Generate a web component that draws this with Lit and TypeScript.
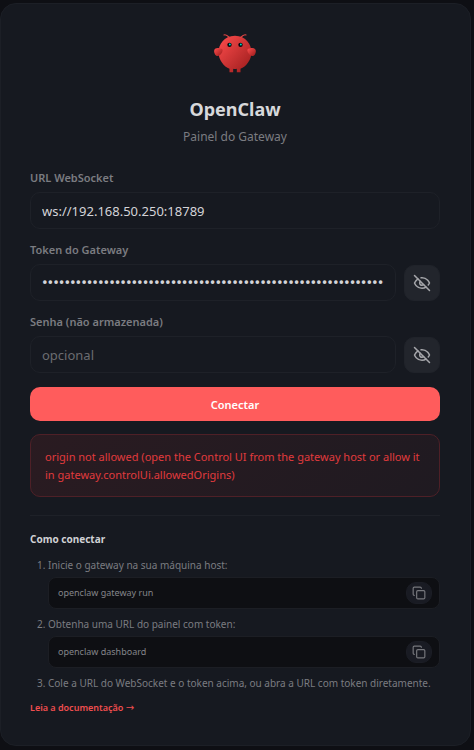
import { LitElement, html, css, svg } from "lit";
import { customElement, property, state } from "lit/decorators.js";

const eyeOff = svg`
  <path d="M9.88 9.88a3 3 0 1 0 4.24 4.24"/>
  <path d="M10.73 5.08A10.43 10.43 0 0 1 12 5c7 0 10 7 10 7a13.16 13.16 0 0 1-1.67 2.68"/>
  <path d="M6.61 6.61A13.526 13.526 0 0 0 2 12s3 7 10 7a9.74 9.74 0 0 0 5.39-1.61"/>
  <path d="m2 2 20 20"/>`;

const eye = svg`
  <path d="M2 12s3-7 10-7 10 7 10 7-3 7-10 7-10-7-10-7Z"/>
  <circle cx="12" cy="12" r="3"/>`;

@customElement("secret-field")
export class SecretField extends LitElement {
  @property() label = "";
  @property() value = "";
  @property() placeholder = "";
  @state() private revealed = false;

  static styles = css`
    :host { display: block; }
    * { box-sizing: border-box; }
    .label { display: block; font-size: 11px; line-height: 18px; font-weight: 600; color: #7b7c81; margin-bottom: 5px; }
    .row { display: flex; align-items: center; gap: 8px; }
    .input {
      flex: 1; min-width: 0; height: 37px; padding: 0 11px; border: 1px solid #1e2128; border-radius: 10px;
      background: #161920; color: #d4d4d8; font: inherit; font-size: 13px; outline: none;
    }
    .input[type="password"]:not(:placeholder-shown) { font-family: Roboto, sans-serif; font-size: 16px; font-weight: 500; }
    .input::placeholder { color: #6b6c70; opacity: 1; }
    .toggle {
      flex: none; width: 36px; height: 36px; padding: 0; display: grid; place-items: center;
      border: 1px solid #20232a; border-radius: 10px; background: #22252c; color: #a5a6aa; cursor: pointer;
    }
    .icon { width: 18px; height: 18px; fill: none; stroke: currentColor; stroke-width: 2; stroke-linecap: round; stroke-linejoin: round; }
  `;

  render() {
    return html`
      <label class="label" for="field">${this.label}</label>
      <div class="row">
        <input class="input" id="field" type=${this.revealed ? "text" : "password"}
          .value=${this.value} placeholder=${this.placeholder} autocomplete="off" />
        <button class="toggle" type="button" aria-label="Alternar visibilidade"
          @click=${() => (this.revealed = !this.revealed)}>
          <svg class="icon" viewBox="0 0 24 24" aria-hidden="true">${this.revealed ? eye : eyeOff}</svg>
        </button>
      </div>`;
  }
}

@customElement("command-line")
export class CommandLine extends LitElement {
  @property() command = "";

  static styles = css`
    :host { display: block; }
    * { box-sizing: border-box; }
    .box {
      display: flex; align-items: center; justify-content: space-between; height: 32px; padding: 0 7px 0 9px;
      border: 1px solid #1c1e24; border-radius: 8px; background: #0e0f13;
    }
    .code { font-family: inherit; font-size: 9px; line-height: 16px; color: #84858a; }
    .copy {
      width: 26px; height: 22px; padding: 0; display: grid; place-items: center;
      border: 1px solid #1b1d25; border-radius: 10px; background: #191b23; color: #77787d; cursor: pointer;
    }
    .icon { width: 14px; height: 14px; fill: none; stroke: currentColor; stroke-width: 2; stroke-linecap: round; stroke-linejoin: round; }
  `;

  render() {
    return html`
      <div class="box">
        <code class="code">${this.command}</code>
        <button class="copy" type="button" aria-label="Copiar comando"
          @click=${() => navigator.clipboard?.writeText(this.command)}>
          <svg class="icon" viewBox="0 0 24 24" aria-hidden="true">
            <rect x="8" y="8" width="14" height="14" rx="2"/>
            <path d="M4 16c-1.1 0-2-.9-2-2V4c0-1.1.9-2 2-2h10c1.1 0 2 .9 2 2"/>
          </svg>
        </button>
      </div>`;
  }
}

@customElement("app-root")
export class AppRoot extends LitElement {
  static styles = css`
    :host {
      display: block; box-sizing: border-box; min-height: 100vh; padding: 3px 3px 4px 0; background: #0e0f14;
      font-family: "Noto Sans", "Open Sans", sans-serif; color: #d4d4d8;
    }
    * { box-sizing: border-box; }
    .card { padding: 28px 30px 28px 29px; border: 1px solid #1c1f26; border-radius: 16px; background: #161920; }
    .header { display: flex; flex-direction: column; align-items: center; margin-bottom: 23px; }
    .logo { width: 44px; height: 44px; }
    .title { margin: 19px 0 0; font-size: 18px; line-height: 28px; font-weight: 700; color: #d7d8db; }
    .subtitle { margin: 5px 0 0; font-size: 12px; line-height: 18px; color: #7b7c81; }
    .form { display: flex; flex-direction: column; gap: 12px; }
    .label { display: block; font-size: 11px; line-height: 18px; font-weight: 600; color: #7b7c81; margin-bottom: 5px; }
    .input {
      display: block; width: 100%; height: 37px; padding: 0 11px; border: 1px solid #1e2128; border-radius: 10px;
      background: #161920; color: #d4d4d8; font: inherit; font-size: 13px; outline: none;
    }
    .submit {
      height: 34px; margin-top: 2px; border: 0; border-radius: 10px; background: #ff5c5c; color: #fff;
      font: inherit; font-size: 11px; font-weight: 600; cursor: pointer;
    }
    .error {
      margin-top: 13px; padding: 13px 14px 12px; border: 1px solid #4e2027; border-radius: 10px;
      background: linear-gradient(135deg, #2a1b21, #1f1a21); color: #e03a3d; font-size: 11px; line-height: 18px;
    }
    .help { margin-top: 18px; padding-top: 14px; border-top: 1px solid #1e2128; }
    .heading { margin: 0 0 8px; font-size: 10px; line-height: 18px; font-weight: 700; color: #d0d1d4; }
    .steps { margin: 0; padding: 0 0 0 18px; font-size: 10px; line-height: 18px; color: #7b7c81; }
    .command { margin: 3px 0 6px; }
    .docs { display: inline-block; margin-top: 7px; font-size: 9px; line-height: 18px; font-weight: 600; color: #f04e4f; text-decoration: none; }
    .arrow { font-family: "DejaVu Sans", sans-serif; font-size: 10px; font-weight: 400; line-height: 1; }
  `;

  private token = "4f9c2a71".repeat(9);

  render() {
    return html`
      <main class="card">
        <header class="header">
          <svg class="logo" viewBox="0 0 120 120" fill="none" aria-hidden="true">
            <defs>
              <linearGradient id="shell" x1="0%" y1="0%" x2="100%" y2="100%">
                <stop offset="0%" stop-color="#ff4d4d"/>
                <stop offset="100%" stop-color="#991b1b"/>
              </linearGradient>
            </defs>
            <path fill="url(#shell)" d="M60 10C30 10 15 35 15 55C15 75 30 95 45 100L45 110L55 110L55 100C55 100 60 102 65 100L65 110L75 110L75 100C90 95 105 75 105 55C105 35 90 10 60 10Z"/>
            <path fill="url(#shell)" d="M20 45C5 40 0 50 5 60C10 70 20 65 25 55C28 48 25 45 20 45Z"/>
            <path fill="url(#shell)" d="M100 45C115 40 120 50 115 60C110 70 100 65 95 55C92 48 95 45 100 45Z"/>
            <path d="M45 15Q35 5 30 8M75 15Q85 5 90 8" stroke="#e04444" stroke-width="3" stroke-linecap="round"/>
            <circle cx="45" cy="35" r="6" fill="#050810"/>
            <circle cx="75" cy="35" r="6" fill="#050810"/>
            <circle cx="46" cy="34" r="2.5" fill="#00e5cc"/>
            <circle cx="76" cy="34" r="2.5" fill="#00e5cc"/>
          </svg>
          <h1 class="title">OpenClaw</h1>
          <p class="subtitle">Painel do Gateway</p>
        </header>

        <form class="form" @submit=${(e: Event) => e.preventDefault()}>
          <div>
            <label class="label" for="url">URL WebSocket</label>
            <input class="input" id="url" type="text" .value=${"ws://192.168.50.250:18789"} />
          </div>
          <secret-field label="Token do Gateway" .value=${this.token}></secret-field>
          <secret-field label="Senha (não armazenada)" placeholder="opcional"></secret-field>
          <button class="submit" type="submit">Conectar</button>
        </form>

        <div class="error" role="alert">origin not allowed (open the Control UI from the gateway host or allow it in gateway.controlUi.allowedOrigins)</div>

        <section class="help">
          <h2 class="heading">Como conectar</h2>
          <ol class="steps">
            <li>Inicie o gateway na sua máquina host:
              <command-line class="command" command="openclaw gateway run"></command-line>
            </li>
            <li>Obtenha uma URL do painel com token:
              <command-line class="command" command="openclaw dashboard"></command-line>
            </li>
            <li>Cole a URL do WebSocket e o token acima, ou abra a URL com token diretamente.</li>
          </ol>
          <a class="docs" href="#docs">Leia a documentação <span class="arrow">→</span></a>
        </section>
      </main>`;
  }
}
